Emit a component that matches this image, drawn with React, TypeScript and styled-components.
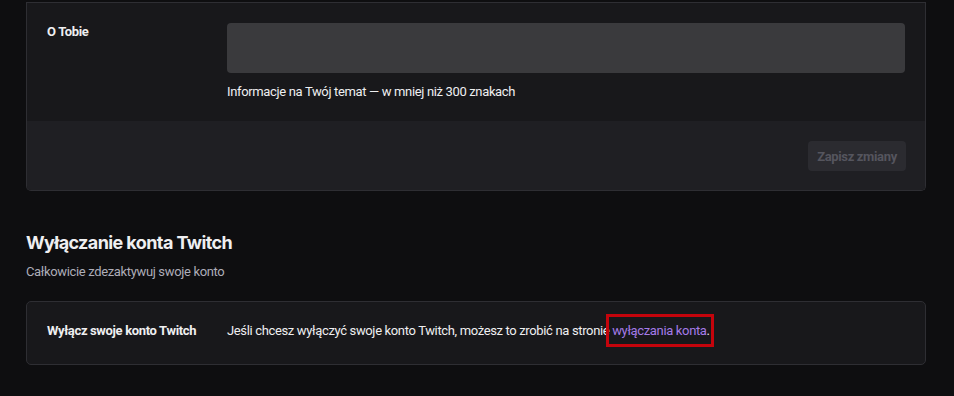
import React from "react";
import styled, { createGlobalStyle } from "styled-components";

const Global = createGlobalStyle`
  html, body { margin: 0; padding: 0; background: #0e0e10; }
  body { font-family: Roboto, "Noto Sans", sans-serif; color: #efeff1; -webkit-font-smoothing: antialiased; letter-spacing: -0.35px; }
  * { box-sizing: border-box; }
`;

const Page = styled.div`
  width: 954px;
  height: 396px;
  overflow: hidden;
  padding: 2px 28px 0 26px;
  display: flex;
  flex-direction: column;
`;

const Card = styled.div<{ $open?: boolean }>`
  background: #18181b;
  border: 1px solid #2e2e33;
  border-top: ${(p) => (p.$open ? "none" : "1px solid #2e2e33")};
  border-radius: ${(p) => (p.$open ? "0 0 5px 5px" : "5px")};
  overflow: hidden;
`;

const Row = styled.div<{ $divider?: boolean; $bottom?: number }>`
  display: flex;
  padding: 20px 20px ${(p) => p.$bottom ?? 20}px;
  border-top: ${(p) => (p.$divider ? "1px solid #2e2e33" : "none")};
`;

const Label = styled.div`
  width: 180px;
  flex: none;
  font-size: 13px;
  font-weight: 700;
  line-height: 18px;
`;

const Field = styled.div`
  flex: 1;
  display: flex;
  flex-direction: column;
  gap: 10px;
`;

const TextArea = styled.div`
  height: 50px;
  border-radius: 4px;
  background: #3a3a3d;
`;

const Hint = styled.div`
  font-size: 13px;
  line-height: 18px;
  color: #efeff1;
`;

const Footer = styled.div`
  background: #1f1f23;
  display: flex;
  justify-content: flex-end;
  padding: 20px 19px 19px;
`;

const Button = styled.button`
  height: 30px;
  width: 98px;
  border: none;
  border-radius: 4px;
  background: #2b2b30;
  color: #55555e;
  font-family: inherit;
  font-size: 13px;
  font-weight: 700;
  letter-spacing: -0.35px;
  padding: 0;
`;

const Section = styled.div`
  margin-top: 40px;
  display: flex;
  flex-direction: column;
`;

const Heading = styled.h2`
  margin: 0;
  font-family: Inter, Roboto, sans-serif;
  font-size: 18px;
  font-weight: 700;
  line-height: 24px;
  color: #efeff1;
  letter-spacing: -0.6px;
`;

const Sub = styled.p`
  margin: 8px 0 20px;
  font-size: 13px;
  line-height: 18px;
  color: #adadb8;
`;

const Text = styled.div`
  font-size: 13px;
  line-height: 18px;
`;

const Link = styled.a`
  position: relative;
  color: #a57be8;
  text-decoration: none;
  &::after {
    content: "";
    position: absolute;
    left: -6px;
    right: -7px;
    top: -9px;
    bottom: -9px;
    border: 3px solid #c4040c;
  }
`;

export default function App() {
  return (
    <>
      <Global />
      <Page>
        <Card $open>
          <Row $divider>
            <Label>O Tobie</Label>
            <Field>
              <TextArea />
              <Hint>Informacje na Twój temat — w mniej niż 300 znakach</Hint>
            </Field>
          </Row>
          <Footer>
            <Button>Zapisz zmiany</Button>
          </Footer>
        </Card>
        <Section>
          <Heading>Wyłączanie konta Twitch</Heading>
          <Sub>Całkowicie zdezaktywuj swoje konto</Sub>
          <Card>
            <Row $bottom={24}>
              <Label>Wyłącz swoje konto Twitch</Label>
              <Text>
                Jeśli chcesz wyłączyć swoje konto Twitch, możesz to zrobić na stronie{" "}
                <Link href="#">wyłączania konta</Link>.
              </Text>
            </Row>
          </Card>
        </Section>
      </Page>
    </>
  );
}
